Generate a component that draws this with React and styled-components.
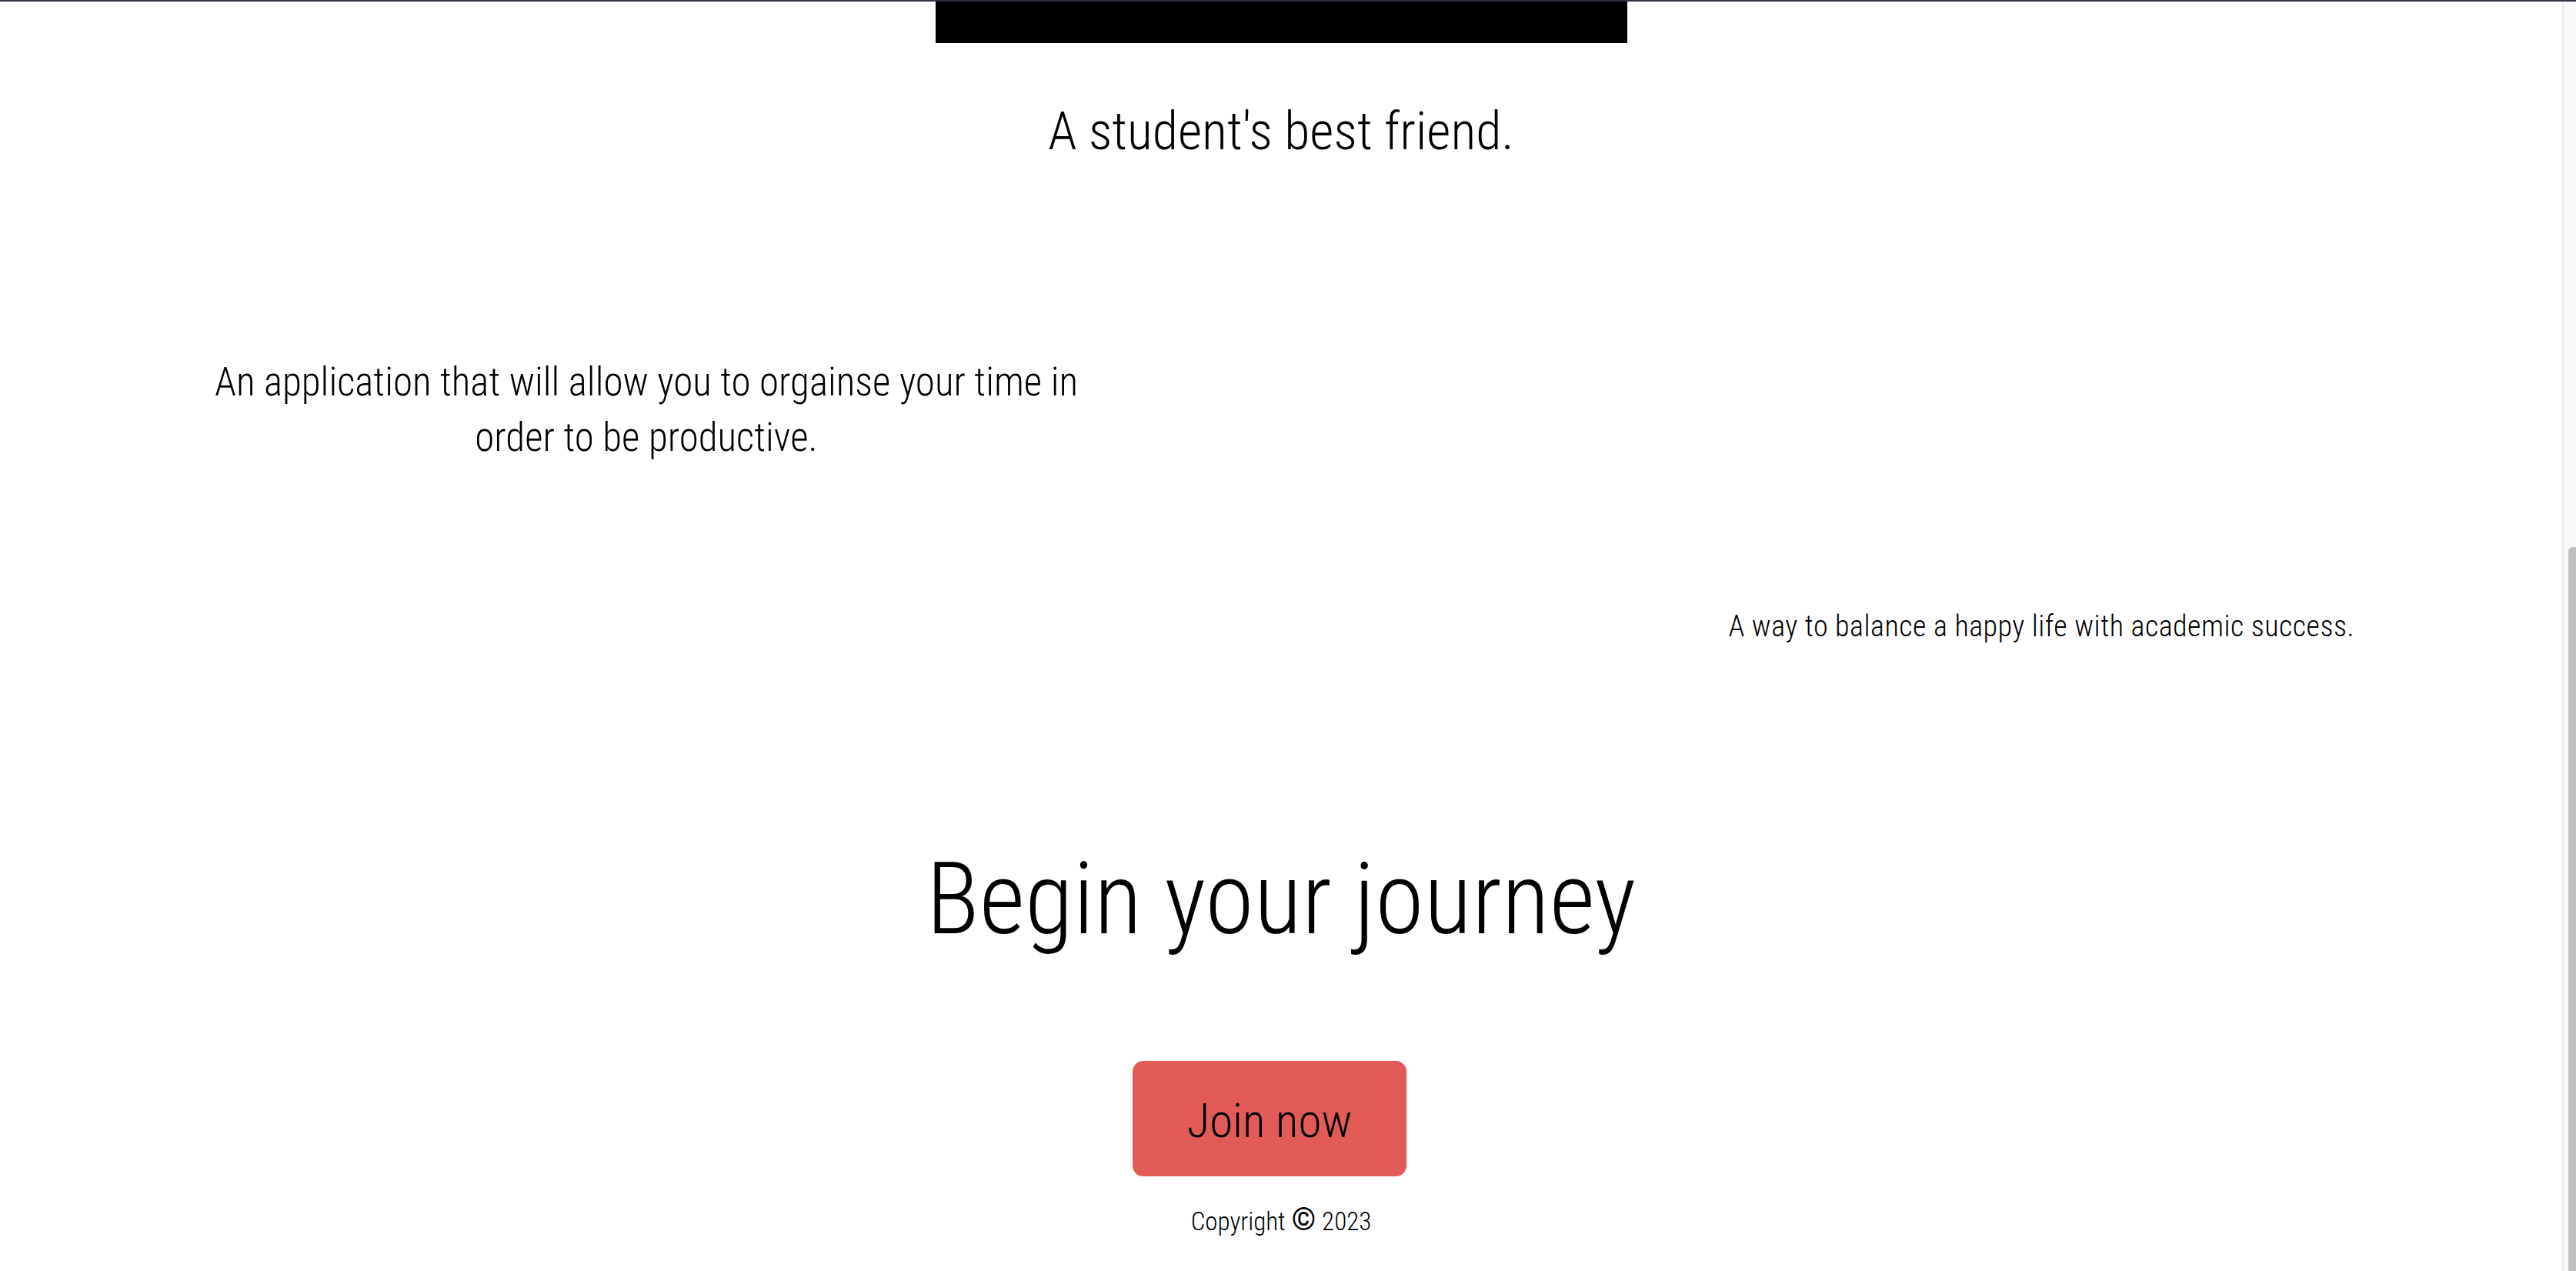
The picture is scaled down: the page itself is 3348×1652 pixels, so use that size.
import React, { useLayoutEffect, useRef } from 'react';
import styled, { createGlobalStyle } from 'styled-components';

const GlobalStyle = createGlobalStyle`
  html, body, #root {
    height: 100%;
  }
  body {
    margin: 0;
    overflow: hidden;
    background: #fff;
    color: #000;
    font-family: Roboto, 'Open Sans', 'Liberation Sans', sans-serif;
    font-weight: 300;
    font-stretch: 75%;
  }
`;

const Frame = styled.div`
  height: 100vh;
  box-sizing: border-box;
  border-top: 2px solid #30323f;
  display: flex;
`;

const Scroller = styled.div`
  flex: 1;
  min-width: 0;
  overflow: hidden;
`;

// the window's scroll bar, page scrolled to its end
const ScrollRail = styled.div`
  width: 16px;
  flex: none;
  display: flex;
  flex-direction: column;
  padding-top: 709px;
  background: #f8f8f8;
  border-left: 2px solid #e8e8e8;
`;

const ScrollThumb = styled.div`
  flex: 1;
  margin-left: 6px;
  background: #c1c1c1;
  border-top-left-radius: 6px;
`;

const Main = styled.main`
  display: flex;
  flex-direction: column;
  align-items: center;
  padding-bottom: 45px;
`;

const HeroImage = styled.div`
  width: 899px;
  height: 1297px;
  background: #000;
`;

const Tagline = styled.h1`
  margin: 74px 0 0;
  font-size: 68px;
  line-height: 82px;
  font-weight: 300;
`;

const Features = styled.section`
  align-self: stretch;
  display: flex;
  flex-direction: column;
`;

const FeatureRow = styled.div`
  display: flex;
  justify-content: ${(p) => (p.$side === 'right' ? 'flex-end' : 'flex-start')};
  margin-top: ${(p) => p.$gap}px;
  padding: ${(p) => (p.$side === 'right' ? '0 270px 0 0' : '0 0 0 255px')};
`;

const FeatureText = styled.p`
  margin: 0;
  width: ${(p) => (p.$width ? `${p.$width}px` : 'auto')};
  text-align: center;
  font-size: ${(p) => p.$size}px;
  line-height: ${(p) => p.$lineHeight}px;
  letter-spacing: ${(p) => p.$tracking || 0}px;
`;

const JourneyTitle = styled.h2`
  margin: 253px 0 0;
  font-size: 129px;
  line-height: 152px;
  font-weight: 300;
`;

const JoinButton = styled.button`
  margin: 134px 30px 0 0;
  width: 356px;
  height: 150px;
  padding: 7px 0 0;
  display: flex;
  align-items: center;
  justify-content: center;
  border: none;
  border-radius: 14px;
  background: #e25b56;
  color: #000;
  font-family: inherit;
  font-weight: 300;
  font-stretch: 75%;
  font-size: 61px;
  line-height: 1;
  cursor: pointer;
`;

const Copyright = styled.footer`
  margin-top: 38px;
  font-size: 33px;
  line-height: 38px;
  display: flex;
  align-items: baseline;
  gap: 8px;
`;

const CopySign = styled.span`
  font-size: 40px;
  line-height: 38px;
  font-weight: 500;
`;

export default function App() {
  const scrollRef = useRef(null);

  useLayoutEffect(() => {
    const el = scrollRef.current;
    if (el) el.scrollTop = el.scrollHeight;
  }, []);

  return (
    <>
      <GlobalStyle />
      <Frame>
        <Scroller ref={scrollRef}>
          <Main>
            <HeroImage />
            <Tagline>A student's best friend.</Tagline>
            <Features>
              <FeatureRow $gap={249}>
                <FeatureText $width={1170} $size={51} $lineHeight={72}>
                  An application that will allow you to orgainse your time in
                  order to be productive.
                </FeatureText>
              </FeatureRow>
              <FeatureRow $side="right" $gap={183}>
                <FeatureText $size={38} $lineHeight={52} $tracking={0.5}>
                  A way to balance a happy life with academic success.
                </FeatureText>
              </FeatureRow>
            </Features>
            <JourneyTitle>Begin your journey</JourneyTitle>
            <JoinButton>Join now</JoinButton>
            <Copyright>
              <span>Copyright</span>
              <CopySign>©</CopySign>
              <span>2023</span>
            </Copyright>
          </Main>
        </Scroller>
        <ScrollRail>
          <ScrollThumb />
        </ScrollRail>
      </Frame>
    </>
  );
}
